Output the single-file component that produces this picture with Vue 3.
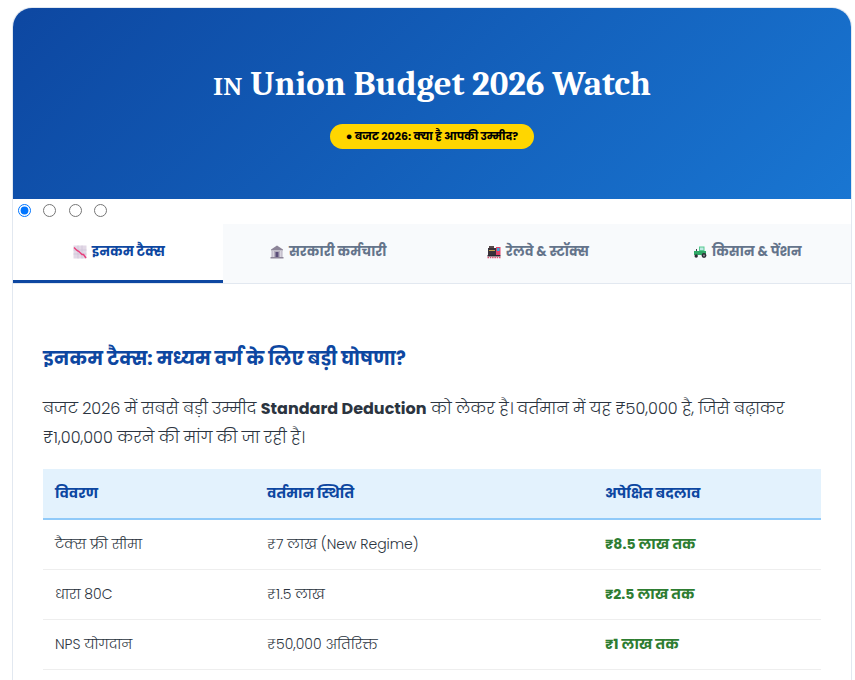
<template>
  <div class="page">
    <div class="card">
      <header class="hero">
        <h1 class="hero-title"><span class="flag">IN</span> Union Budget 2026 Watch</h1>
        <span class="hero-badge">● बजट 2026: क्या है आपकी उम्मीद?</span>
      </header>

      <div class="radios">
        <input
          v-for="n in 4"
          :key="n"
          type="radio"
          name="slide"
          :value="n"
          v-model="slide"
        />
      </div>

      <nav class="tabs">
        <button
          v-for="(tab, i) in tabs"
          :key="tab.label"
          class="tab"
          :class="{ active: i === activeTab }"
          @click="activeTab = i"
        >
          <svg v-if="tab.icon === 'chart'" class="tab-icon" viewBox="0 0 14 14">
            <rect x="0.5" y="0.5" width="13" height="13" fill="#e2d8e6" />
            <path d="M0.5 5H13.5M0.5 9H13.5M5 0.5V13.5M9 0.5V13.5" stroke="#cfc3d6" stroke-width="0.7" />
            <path d="M1 2.5L4 5.5L6 6.5L9 9.5L10.5 9.5L13 13" fill="none" stroke="#e8407c" stroke-width="1.5" />
          </svg>
          <svg v-else-if="tab.icon === 'bank'" class="tab-icon" viewBox="0 0 14 14">
            <path d="M7 0.5L13 4.5V5.5H1V4.5Z" fill="#8d8599" />
            <rect x="1.5" y="6" width="11" height="6" fill="#b5aebf" />
            <rect x="2.5" y="6" width="1.5" height="6" fill="#d8d3de" />
            <rect x="10" y="6" width="1.5" height="6" fill="#d8d3de" />
            <rect x="5.5" y="7" width="3" height="5" fill="#5c4f7a" />
            <rect x="0.5" y="12" width="13" height="1.5" fill="#8d8599" />
          </svg>
          <svg v-else-if="tab.icon === 'train'" class="tab-icon" viewBox="0 0 14 14">
            <rect x="2" y="1" width="5" height="2" fill="#5a4a4a" />
            <rect x="1" y="3" width="8" height="7" fill="#39323a" />
            <rect x="2" y="5" width="6" height="1" fill="#c9a24b" />
            <rect x="9" y="2" width="4.5" height="8" fill="#e0436b" />
            <rect x="10" y="3" width="2.5" height="3" fill="#35a8e0" />
            <rect x="0.5" y="10" width="13" height="1.5" fill="#2a2630" />
            <path d="M0.5 12.5H13.5" stroke="#d9506f" stroke-width="1.4" stroke-dasharray="1.5 0.8" />
          </svg>
          <svg v-else class="tab-icon" viewBox="0 0 14 14">
            <rect x="6" y="1.5" width="5.5" height="4.5" fill="#57c98f" />
            <rect x="7" y="2.5" width="3.5" height="2.5" fill="#bfe9e4" />
            <path d="M1 6H13V10H1Z" fill="#2fa866" />
            <rect x="3" y="4" width="1" height="2" fill="#3c3c44" />
            <circle cx="3.2" cy="11" r="1.7" fill="#2e2e36" />
            <circle cx="11" cy="10.5" r="2.4" fill="#2e2e36" />
            <circle cx="11" cy="10.5" r="0.9" fill="#9aa0a8" />
          </svg>
          <span>{{ tab.label }}</span>
        </button>
      </nav>

      <section class="content">
        <h3 class="heading">इनकम टैक्स: मध्यम वर्ग के लिए बड़ी घोषणा?</h3>
        <p class="intro">
          बजट 2026 में सबसे बड़ी उम्मीद <strong>Standard Deduction</strong> को लेकर है। वर्तमान में यह ₹50,000 है, जिसे बढ़ाकर ₹1,00,000 करने की मांग की जा रही है।
        </p>
        <table class="budget-table">
          <colgroup>
            <col class="col-a" />
            <col class="col-b" />
            <col />
          </colgroup>
          <thead>
            <tr>
              <th>विवरण</th>
              <th>वर्तमान स्थिति</th>
              <th>अपेक्षित बदलाव</th>
            </tr>
          </thead>
          <tbody>
            <tr v-for="row in rows" :key="row.name">
              <td>{{ row.name }}</td>
              <td>{{ row.now }}</td>
              <td class="expected">{{ row.expected }}</td>
            </tr>
          </tbody>
        </table>
      </section>
    </div>
  </div>
</template>

<script setup>
import { ref } from 'vue'

const slide = ref(1)
const activeTab = ref(0)

const tabs = [
  { icon: 'chart', label: 'इनकम टैक्स' },
  { icon: 'bank', label: 'सरकारी कर्मचारी' },
  { icon: 'train', label: 'रेलवे & स्टॉक्स' },
  { icon: 'tractor', label: 'किसान & पेंशन' }
]

const rows = [
  { name: 'टैक्स फ्री सीमा', now: '₹7 लाख (New Regime)', expected: '₹8.5 लाख तक' },
  { name: 'धारा 80C', now: '₹1.5 लाख', expected: '₹2.5 लाख तक' },
  { name: 'NPS योगदान', now: '₹50,000 अतिरिक्त', expected: '₹1 लाख तक' }
]
</script>

<style>
html,
body {
  margin: 0;
  background: #fff;
  overflow: hidden;
}
</style>

<style scoped>
.page {
  height: 680px;
  overflow: hidden;
  padding: 7px 3px 0 12px;
  box-sizing: border-box;
  font-family: 'Poppins', 'Noto Sans Devanagari', 'Noto Sans', sans-serif;
  color: #2b3440;
}

.card {
  border: 1px solid #e2e8f0;
  border-bottom: none;
  border-radius: 20px 20px 0 0;
  overflow: hidden;
  min-height: 700px;
}

.hero {
  height: 191px;
  box-sizing: border-box;
  padding-top: 51px;
  background: linear-gradient(135deg, #0d47a1, #1976d2);
  color: #fff;
  text-align: center;
}

.hero-title {
  margin: 0 0 11px;
  font-family: 'Caladea', 'Liberation Serif', serif;
  font-size: 34.8px;
  line-height: 50px;
  font-weight: 700;
}

.flag {
  font-family: 'Noto Serif', serif;
  font-size: 24px;
  letter-spacing: 0.5px;
}

.hero-badge {
  display: inline-block;
  padding: 0 16px;
  height: 25px;
  line-height: 25px;
  border-radius: 20px;
  background: #ffd600;
  color: #000;
  font-size: 11px;
  font-weight: 700;
}

.radios {
  display: flex;
  gap: 12.4px;
  height: 25px;
  box-sizing: border-box;
  padding: 0 0 2px 5px;
  align-items: center;
}

.radios input {
  margin: 0;
  width: 13px;
  height: 13px;
}

.tabs {
  display: flex;
  background: #f8fafc;
  border-bottom: 1px solid #e2e8f0;
}

.tab {
  flex: 1;
  height: 59px;
  padding: 0 0 0 2px;
  border: none;
  border-bottom: 3px solid transparent;
  background: none;
  display: flex;
  align-items: center;
  justify-content: center;
  gap: 5px;
  font-family: inherit;
  font-size: 13.12px;
  font-weight: 700;
  color: #64748b;
  cursor: pointer;
}

.tab.active {
  background: #fff;
  color: #0d47a1;
  border-bottom-color: #0d47a1;
}

.tab-icon {
  width: 14px;
  height: 14px;
  flex: none;
}

.content {
  padding: 60px 30px 0;
}

.heading {
  margin: 0 0 20px;
  font-size: 18.72px;
  line-height: 30px;
  font-weight: 700;
  color: #0d47a1;
}

.intro {
  margin: 0 0 17px;
  font-size: 16px;
  line-height: 29px;
  font-weight: 300;
}

.intro strong {
  font-weight: 700;
}

.budget-table {
  width: 100%;
  border-collapse: collapse;
  table-layout: fixed;
  font-size: 14px;
}

.col-a {
  width: 212px;
}

.col-b {
  width: 338px;
}

.budget-table th {
  height: 49px;
  padding: 0 12px;
  text-align: left;
  background: #e3f2fd;
  border-bottom: 2px solid #90caf9;
  color: #0d47a1;
  font-weight: 700;
}

.budget-table td {
  height: 49px;
  padding: 0 12px;
  border-bottom: 1px solid #eee;
  font-weight: 300;
}

.budget-table td.expected {
  color: #2e7d32;
  font-weight: 700;
}
</style>
